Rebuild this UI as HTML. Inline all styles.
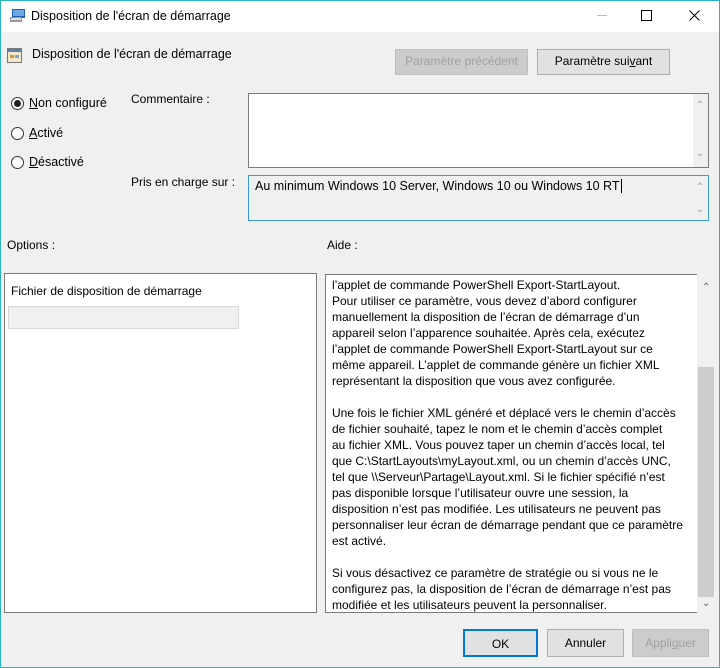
<!DOCTYPE html>
<html><head><meta charset="utf-8"><style>
*{box-sizing:border-box;margin:0;padding:0}
body{width:720px;height:668px;overflow:hidden;background:#f0f0f0;font-family:"Liberation Sans",sans-serif;font-size:12px;color:#000;position:relative}
.frame{position:absolute;left:0;top:0;width:720px;height:668px;border:1px solid #2ab3c3}
.a{position:absolute;white-space:nowrap}
.title{position:absolute;left:1px;top:1px;width:718px;height:31px;background:#fff}
.btn{position:absolute;background:#e1e1e1;border:1px solid #adadad;text-align:center;line-height:23px;font-size:12px}
.dis{color:#a0a0a0;background:#cccccc;border-color:#bfbfbf}
.box{position:absolute;background:#fff;border:1px solid #7a7a7a}
.radio{position:absolute;width:13px;height:13px;border:1px solid #333;border-radius:50%;background:#fff}
.help{position:absolute;left:332px;top:277px;line-height:16px;font-size:12px;white-space:nowrap}
u{text-decoration:underline}
.chev{position:absolute;color:#a0a0a0;font-size:10px}
</style></head><body>
<div class="title"></div>
<svg class="a" style="left:9px;top:8px" width="18" height="16"><rect x="3" y="1" width="13" height="9" fill="#1f5fb0"/><rect x="4" y="2" width="11" height="6" fill="#6fa8e6"/><rect x="1" y="9" width="12" height="5" fill="#9a9a9a"/><rect x="2" y="10" width="10" height="2" fill="#ddd"/></svg>
<div class="a" style="left:31px;top:9px;font-size:12.5px">Disposition de l'écran de démarrage</div>
<svg class="a" style="left:597px;top:15px" width="12" height="2"><rect width="10" height="1" fill="#bbb"/></svg>
<svg class="a" style="left:641px;top:10px" width="12" height="12"><rect x="0.5" y="0.5" width="10" height="10" fill="none" stroke="#000"/></svg>
<svg class="a" style="left:689px;top:10px" width="12" height="12"><path d="M0.5 0.5L10.5 10.5M10.5 0.5L0.5 10.5" stroke="#000"/></svg>
<svg class="a" style="left:7px;top:48px" width="16" height="16"><rect x="0.5" y="0.5" width="14" height="14" fill="#f3e9c8" stroke="#777"/><rect x="1" y="1" width="13" height="3" fill="#5a7fa8"/><rect x="3" y="7" width="4" height="3" fill="#c89a3a"/><rect x="8" y="7" width="4" height="3" fill="#7aa0c8"/></svg>
<div class="a" style="left:32px;top:47px;font-size:12.5px">Disposition de l'écran de démarrage</div>
<div class="btn dis" style="left:395px;top:49px;width:133px;height:26px">Paramètre précédent</div>
<div class="btn" style="left:537px;top:49px;width:133px;height:26px">Paramètre sui<u>v</u>ant</div>
<div class="radio" style="left:11px;top:97px"></div><div class="a" style="left:14px;top:100px;width:7px;height:7px;border-radius:50%;background:#222"></div>
<div class="a" style="left:29px;top:96px;font-size:12.5px"><u>N</u>on configuré</div>
<div class="radio" style="left:11px;top:127px"></div><div class="a" style="left:29px;top:126px;font-size:12.5px"><u>A</u>ctivé</div>
<div class="radio" style="left:11px;top:156px"></div><div class="a" style="left:29px;top:155px;font-size:12.5px"><u>D</u>ésactivé</div>
<div class="a" style="left:131px;top:92px">Commentaire :</div>
<div class="a" style="left:131px;top:175px">Pris en charge sur :</div>
<div class="box" style="left:248px;top:93px;width:461px;height:75px"></div>
<div class="a" style="left:693px;top:94px;width:15px;height:73px;background:#f0f0f0"></div>
<div class="chev" style="left:696px;top:100px">&#8963;</div><div class="chev" style="left:696px;top:148px">&#8964;</div>
<div class="a" style="left:248px;top:175px;width:461px;height:46px;border:1px solid #3a9ad9;background:#f0f0f0"></div>
<div class="a" style="left:255px;top:179px;font-size:12.5px">Au minimum Windows 10 Server, Windows 10 ou Windows 10 RT<span style="border-left:1px solid #000;margin-left:1px"></span></div>
<div class="chev" style="left:696px;top:182px">&#8963;</div><div class="chev" style="left:696px;top:204px">&#8964;</div>
<div class="a" style="left:7px;top:238px">Options :</div>
<div class="a" style="left:327px;top:238px">Aide :</div>
<div class="box" style="left:4px;top:273px;width:313px;height:340px"></div>
<div class="a" style="left:11px;top:284px">Fichier de disposition de démarrage</div>
<div class="a" style="left:8px;top:306px;width:231px;height:23px;background:#f0f0f0;border:1px solid #d9d9d9"></div>
<div class="box" style="left:325px;top:274px;width:373px;height:339px"></div>
<div class="a" style="left:697px;top:274px;width:18px;height:339px;background:#f0f0f0"></div>
<div class="a" style="left:698px;top:367px;width:16px;height:230px;background:#cdcdcd"></div>
<div class="chev" style="left:702px;top:282px;color:#606060">&#8963;</div><div class="chev" style="left:702px;top:598px;color:#606060">&#8964;</div>
<div class="help">l’applet de commande PowerShell Export-StartLayout.<br>Pour utiliser ce paramètre, vous devez d’abord configurer<br>manuellement la disposition de l’écran de démarrage d’un<br>appareil selon l’apparence souhaitée. Après cela, exécutez<br>l’applet de commande PowerShell Export-StartLayout sur ce<br>même appareil. L’applet de commande génère un fichier XML<br>représentant la disposition que vous avez configurée.<br><br>Une fois le fichier XML généré et déplacé vers le chemin d’accès<br>de fichier souhaité, tapez le nom et le chemin d’accès complet<br>au fichier XML. Vous pouvez taper un chemin d’accès local, tel<br>que C:\StartLayouts\myLayout.xml, ou un chemin d’accès UNC,<br>tel que \\Serveur\Partage\Layout.xml. Si le fichier spécifié n’est<br>pas disponible lorsque l’utilisateur ouvre une session, la<br>disposition n’est pas modifiée. Les utilisateurs ne peuvent pas<br>personnaliser leur écran de démarrage pendant que ce paramètre<br>est activé.<br><br>Si vous désactivez ce paramètre de stratégie ou si vous ne le<br>configurez pas, la disposition de l’écran de démarrage n’est pas<br>modifiée et les utilisateurs peuvent la personnaliser.</div>
<div class="btn" style="left:463px;top:629px;width:75px;height:28px;line-height:26px;border:2px solid #0078d7">OK</div>
<div class="btn" style="left:547px;top:629px;width:77px;height:28px;line-height:26px">Annuler</div>
<div class="btn dis" style="left:632px;top:629px;width:77px;height:28px;line-height:26px">Appli<u>q</u>uer</div>
<div class="frame"></div>
</body></html>
